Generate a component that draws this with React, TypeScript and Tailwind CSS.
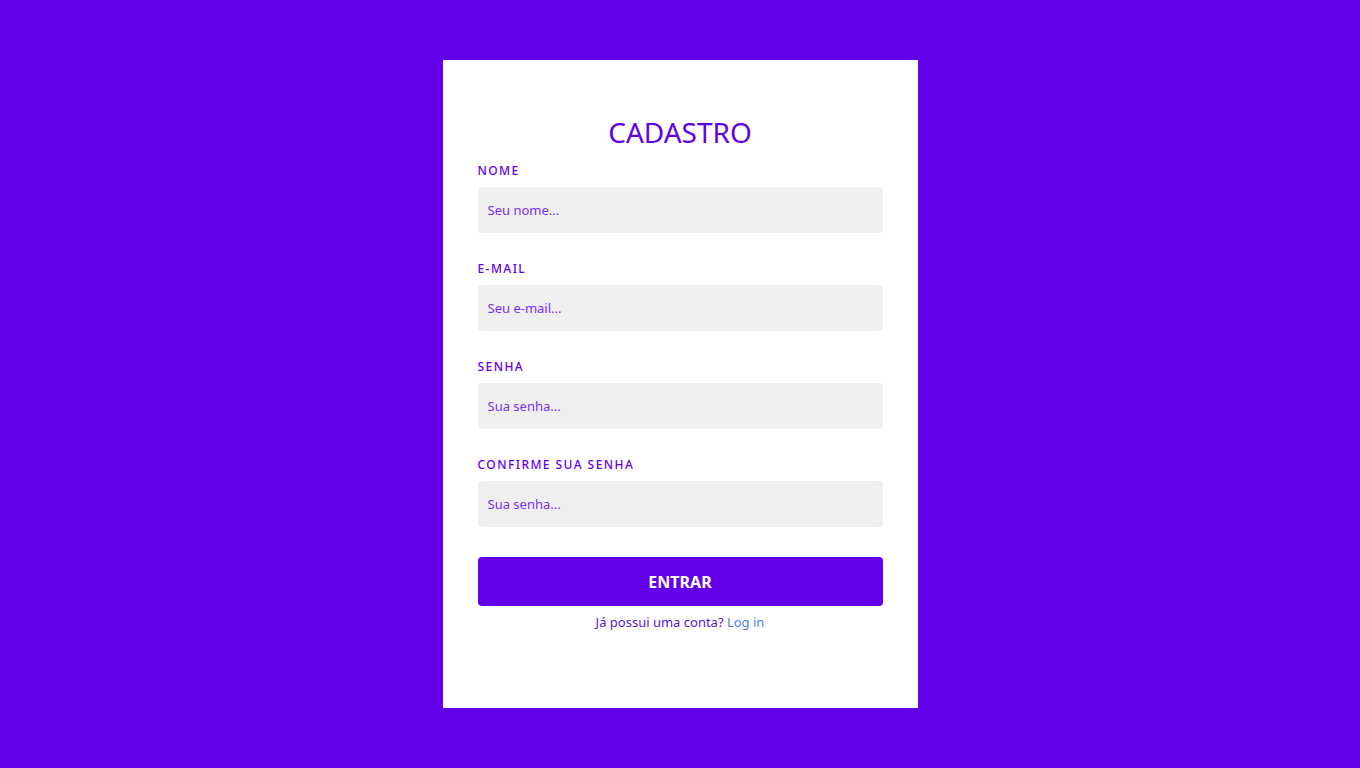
const fields = [
  { label: 'NOME', placeholder: 'Seu nome...', type: 'text' },
  { label: 'E-MAIL', placeholder: 'Seu e-mail...', type: 'email' },
  { label: 'SENHA', placeholder: 'Sua senha...', type: 'password' },
  { label: 'CONFIRME SUA SENHA', placeholder: 'Sua senha...', type: 'password' },
];

export default function App() {
  return (
    <div
      className="min-h-screen w-full bg-[#6200ea] flex justify-center pt-[60px]"
      style={{ fontFamily: '"Noto Sans", "DejaVu Sans", sans-serif' }}
    >
      <div className="w-[475px] h-[648px] bg-white px-[35px] pt-[56px]">
        <h1 className="text-center text-[28px] leading-[32px] text-[#6200ea] mb-[15px]">CADASTRO</h1>

        <form className="flex flex-col">
          {fields.map((f) => (
            <div key={f.label} className="flex flex-col mb-[28px]">
              <label className="text-[12px] leading-[16px] font-medium tracking-[0.12em] text-[#6200ea] mb-[8px]">
                {f.label}
              </label>
              <input
                type={f.type}
                placeholder={f.placeholder}
                className="h-[46px] w-full rounded-[4px] bg-[#efefef] px-[10px] text-[13px] text-[#6200ea] placeholder:text-[#7b2ff7] outline-none"
              />
            </div>
          ))}

          <button
            type="button"
            className="mt-[2px] h-[49px] w-full rounded-[4px] bg-[#6200ea] text-white text-[16px] font-bold"
          >
            ENTRAR
          </button>
          <p className="mt-[8px] text-center text-[13px] leading-[16px] text-[#5a14d8]">
            Já possui uma conta? <a className="text-[#4a7ff0]">Log in</a>
          </p>
        </form>
      </div>
    </div>
  );
}
